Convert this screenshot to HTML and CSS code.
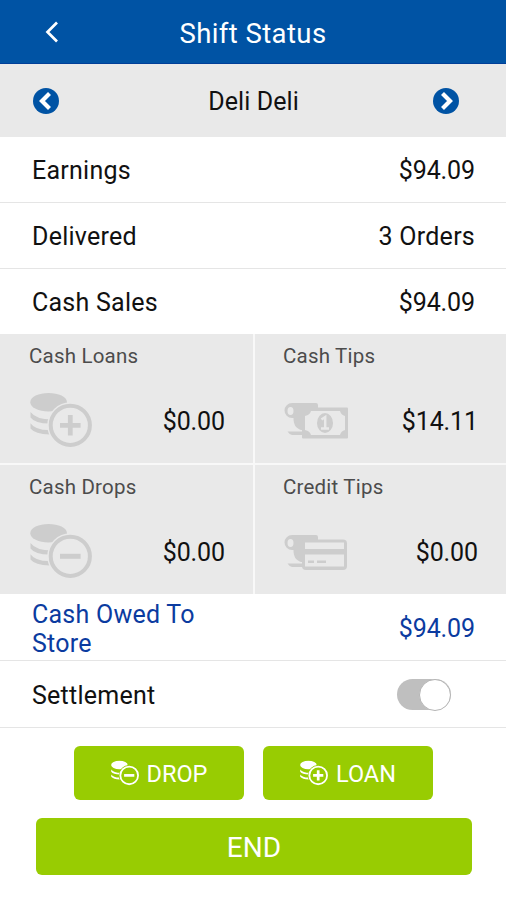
FILE: index.html
```html
<!DOCTYPE html>
<html lang="en">
<head>
<meta charset="utf-8">
<title>Shift Status</title>
<link rel="stylesheet" href="styles.css">
</head>
<body>
<svg class="defs" aria-hidden="true">
  <symbol id="coins" viewBox="0 0 62 56">
    <ellipse cx="18.6" cy="10.2" rx="18.3" ry="9.3" fill="currentColor"/>
    <path fill="currentColor" d="M.5 20Q6 27.500 22 27.500L19.500 31.500Q5 31.500 .5 25.500ZM.5 31.200Q5 38 18.800 38L19.500 42.500Q5 42 .5 36.500Z"/>
    <circle class="coin-gap" cx="40.300" cy="33.300" r="20"/>
    <circle cx="40.300" cy="33.300" r="19.600" fill="none" stroke="currentColor" stroke-width="4"/>
  </symbol>
  <symbol id="hand" viewBox="0 0 64 36">
    <path fill="currentColor" d="M8 0H32Q34 0 34 2V5H21V27H17C12 25 9.500 22 9.500 15H8A7.500 7.500 0 0 1 8 0Z"/>
    <ellipse class="hole" cx="6.500" cy="8" rx="3" ry="4"/>
    <path fill="currentColor" d="M3.500 28.500H20V32H8Q5 31 3.500 28.500Z"/>
  </symbol>
</svg>
<header class="header">
  <svg class="back" viewBox="0 0 14 22"><path d="M12 1.500 2.500 11 12 20.500"/></svg>
  <h1>Shift Status</h1>
</header>
<nav class="store">
  <svg class="step" viewBox="0 0 26 26"><circle cx="13" cy="13" r="13"/><path d="m16.500 5.500-7.500 7.500 7.500 7.500"/></svg>
  <span>Deli Deli</span>
  <svg class="step" viewBox="0 0 26 26"><circle cx="13" cy="13" r="13"/><path d="m9.500 5.500 7.500 7.500-7.500 7.500"/></svg>
</nav>
<main>
  <div class="row"><span>Earnings</span><span class="money">$94.09</span></div>
  <div class="row"><span>Delivered</span><span>3 Orders</span></div>
  <div class="row"><span>Cash Sales</span><span class="money">$94.09</span></div>
  <section class="grid">
    <div class="cell">
      <h2>Cash Loans</h2>
      <div class="amount">
        <svg class="coins" viewBox="0 0 62 56"><use href="#coins"/><path d="M30 33.300H50.600M40.300 23V43.600" stroke="currentColor" stroke-width="4.800"/></svg>
        <span class="money">$0.00</span>
      </div>
    </div>
    <div class="cell">
      <h2>Cash Tips</h2>
      <div class="amount">
        <svg class="note" viewBox="0 0 64 36">
          <use href="#hand"/>
          <rect x="18" y="4.500" width="46" height="31" rx="1" fill="currentColor"/>
          <path class="hole" d="M27 8H56Q57 12 61 13V27Q57 28 56 32H27Q26 28 21 27V13Q26 12 27 8Z"/>
          <ellipse cx="41" cy="20" rx="8" ry="10" fill="currentColor"/>
          <path class="numeral" d="M37.500 16.500 41.200 14V25M37 25.500H45"/>
        </svg>
        <span class="money">$14.11</span>
      </div>
    </div>
    <div class="cell">
      <h2>Cash Drops</h2>
      <div class="amount">
        <svg class="coins" viewBox="0 0 62 56"><use href="#coins"/><path d="M30 33.300H50.600" stroke="currentColor" stroke-width="5"/></svg>
        <span class="money">$0.00</span>
      </div>
    </div>
    <div class="cell">
      <h2>Credit Tips</h2>
      <div class="amount credit">
        <svg class="note" viewBox="0 0 64 36">
          <use href="#hand"/>
          <rect x="18" y="4.500" width="45" height="30.500" rx="4" fill="currentColor"/>
          <path class="hole" d="M21 7.500H60V14H21ZM21 19.500H60V31.500H21Z"/>
          <path d="M24 26.800H30M33 26.800H42" stroke="currentColor" stroke-width="2.500"/>
        </svg>
        <span class="money">$0.00</span>
      </div>
    </div>
  </section>
  <div class="row owed"><span>Cash Owed To<br>Store</span><span class="money">$94.09</span></div>
  <div class="row settle"><span>Settlement</span><span class="toggle"></span></div>
</main>
<footer class="actions">
  <div class="pair">
    <button class="btn"><svg viewBox="0 0 62 56"><use href="#coins"/><path d="M29 33.300H51.600" stroke="currentColor" stroke-width="6"/></svg><span>DROP</span></button>
    <button class="btn"><svg viewBox="0 0 62 56"><use href="#coins"/><path d="M29 33.300H51.600M40.300 22V44.600" stroke="currentColor" stroke-width="6"/></svg><span>LOAN</span></button>
  </div>
  <button class="btn end">END</button>
</footer>
</body>
</html>
```
FILE: styles.css
```css
* { box-sizing: border-box; }
body {
  --icon-bg: #e9e9e9;
  margin: 0;
  height: 900px;
  background: #fff;
  color: #111;
  font-family: Roboto, sans-serif;
  font-size: 25px;
  letter-spacing: .25px;
  overflow: hidden;
}
h1, h2 { margin: 0; font-weight: 400; }
.defs { display: block; width: 0; height: 0; }
.header {
  display: grid;
  grid-template-columns: 45px 1fr 45px;
  align-items: center;
  height: 64px;
  padding-top: 1px;
  background: #0053a4;
  border-bottom: 1px solid #003f98;
  color: #fff;
}
.header h1 { padding-top: 2px; font-size: 27.500px; letter-spacing: .4px; text-align: center; }
.back { width: 14px; height: 22px; justify-self: end; margin-right: -14px; fill: none; stroke: #fff; stroke-width: 2.700; }
.store {
  display: grid;
  grid-template-columns: 26px 1fr 26px;
  align-items: center;
  height: 73px;
  padding: 0 47px 0 33px;
  background: #e9e9e9;
}
.store span { padding: 2px 0 0 15px; letter-spacing: .1px; text-align: center; }
.step { width: 26px; height: 26px; fill: #0053a4; }
.step path { fill: none; stroke: #fff; stroke-width: 4.200; }
.row {
  display: flex;
  align-items: center;
  justify-content: space-between;
  height: 66px;
  padding: 2px 31px 0 32px;
  border-bottom: 1px solid #e5e5e5;
}
.money { letter-spacing: -.1px; }
.grid {
  display: grid;
  grid-template-columns: 253px 1fr;
  grid-template-rows: 129px 129px;
  gap: 2px;
  height: 260px;
  margin-top: -1px;
  background: #f8f8f8;
}
.cell { padding: 9px 28px 0 29px; background: #e9e9e9; }
.cell:nth-child(even) { padding-left: 28px; }
.cell h2 { height: 26px; color: #4c4c4c; font-size: 20.500px; line-height: 26px; letter-spacing: .2px; }
.amount { display: flex; align-items: center; justify-content: space-between; height: 56px; margin-top: 23px; }
.amount .money { padding-top: 2px; }
.amount svg { color: #cdcdcd; }
.coins { width: 62px; height: 56px; margin-left: 1px; }
.note { width: 64px; height: 36px; margin: 1px 0 0 1px; }
.credit .note { margin-top: 3px; }
.coin-gap { fill: var(--icon-bg); stroke: var(--icon-bg); stroke-width: 6; }
.hole { fill: #e9e9e9; }
.numeral { fill: none; stroke: #e9e9e9; stroke-width: 2.500; }
.owed { height: 67px; padding-top: 3px; color: #0b3ba0; line-height: 29px; }
.settle { height: 67px; padding: 2px 55px 0 32px; }
.toggle { display: flex; justify-content: flex-end; width: 54px; height: 31px; margin-top: -2px; border-radius: 16px; background: #bfbfbf; }
.toggle::after { content: ""; width: 30px; height: 30px; border: 1px solid #b5b5b5; border-radius: 50%; background: #fff; }
.actions { padding: 18px 34px 0 36px; }
.pair { display: flex; gap: 19px; padding: 0 39px 0 38px; }
.btn {
  --icon-bg: #98cc02;
  display: flex;
  flex: 1;
  align-items: center;
  justify-content: center;
  gap: 8px;
  height: 54px;
  padding: 1px 0 0;
  border: 0;
  border-radius: 6px;
  background: #98cc02;
  color: #fff;
  font: 400 23.500px Roboto, sans-serif;
}
.btn svg { width: 28px; height: 26px; margin-top: -2px; }
.end { width: 100%; height: 57px; margin-top: 18px; padding-top: 2px; font-size: 28px; }
```
